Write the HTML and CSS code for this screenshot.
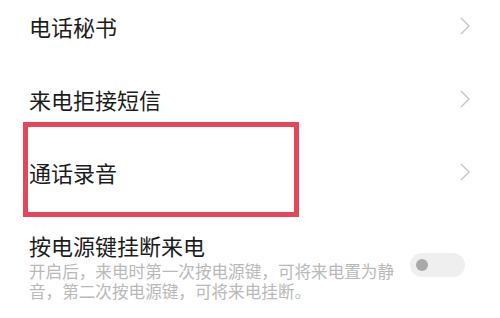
FILE: index.html
```html
<!DOCTYPE html>
<html lang="zh-CN">

<head>
    <meta charset="UTF-8">
    <meta name="viewport" content="width=device-width, initial-scale=1.0">
    <title>通话设置</title>
    <link rel="stylesheet" href="styles.css">
</head>

<body>
    <div class="settings">
        <div class="row">
            <span class="label">电话秘书</span>
            <svg class="chevron" viewBox="0 0 10 18" width="10" height="18">
                <path d="M1 1 L9 9 L1 17" />
            </svg>
        </div>
        <div class="row">
            <span class="label">来电拒接短信</span>
            <svg class="chevron" viewBox="0 0 10 18" width="10" height="18">
                <path d="M1 1 L9 9 L1 17" />
            </svg>
        </div>
        <div class="row">
            <span class="label">通话录音</span>
            <svg class="chevron" viewBox="0 0 10 18" width="10" height="18">
                <path d="M1 1 L9 9 L1 17" />
            </svg>
        </div>
        <div class="row row-switch">
            <div class="text">
                <div class="label">按电源键挂断来电</div>
                <div class="desc">开启后，来电时第一次按电源键，可将来电置为静音，第二次按电源键，可将来电挂断。</div>
            </div>
            <span class="switch"><span class="knob"></span></span>
        </div>

        <!-- annotation box around 通话录音 -->
        <div class="highlight"></div>
    </div>
</body>

</html>
```

FILE: styles.css
```css
body {
    margin: 0;
    background-color: #fff;
    font-family: "Noto Sans CJK SC", "Noto Sans", sans-serif;
    color: #1c1c1c;
    overflow: hidden;
}

.settings {
    position: relative;
    margin-top: -11px;
    padding: 0 30px 0 29px;
}

.row {
    display: flex;
    align-items: center;
    justify-content: space-between;
    height: 73px;
}

.label {
    font-size: 22px;
    line-height: 30px;
}

.chevron {
    fill: none;
    stroke: #c6c6c6;
    stroke-width: 1.4;
}

.row-switch {
    height: auto;
    align-items: flex-start;
    padding-top: 22px;
}

.desc {
    max-width: 372px;
    margin-top: 2px;
    font-size: 16.6px;
    line-height: 19.5px;
    color: #b9b9b9;
}

.switch {
    position: relative;
    display: block;
    width: 55px;
    height: 24px;
    margin-top: 23px;
    margin-right: 5px;
    border-radius: 12px;
    background-color: #efefef;
}

.knob {
    position: absolute;
    left: 6px;
    top: 6px;
    width: 12px;
    height: 12px;
    border-radius: 50%;
    background-color: #a9a9a9;
}

.highlight {
    position: absolute;
    left: 23px;
    top: 133px;
    width: 276px;
    height: 95px;
    box-sizing: border-box;
    border: 5.5px solid #e5475a;
}
```
